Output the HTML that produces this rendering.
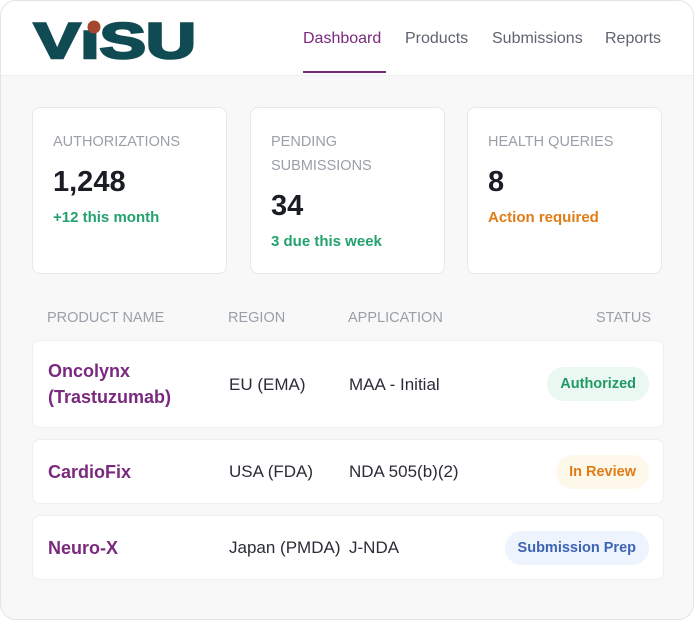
<!DOCTYPE html><html><head><style>
body{margin:0;width:696px;height:622px;background:#fff;font-family:"Liberation Sans",sans-serif;position:relative;overflow:hidden}
.frame{position:absolute;left:0;top:0;width:692px;height:618px;border:1px solid #e2e4e8;border-radius:16px;background:#f8f8f8;overflow:hidden}
.hdr{position:absolute;left:0;top:0;width:100%;height:74px;background:#fff;border-bottom:1px solid #eceef0}
.nav{position:absolute;top:29px;font-size:16px;color:#5f6470}
.card{position:absolute;top:106px;width:195px;height:167px;background:#fff;border:1px solid #e6e8eb;border-radius:8px;box-sizing:border-box}
.lbl{position:absolute;left:20px;top:22px;font-size:14.5px;color:#9aa0a8;line-height:24px}
.num{position:absolute;left:20px;font-size:29px;font-weight:bold;color:#1a1d24}
.sub{position:absolute;left:20px;font-size:15px;font-weight:bold}
.th{position:absolute;top:309px;font-size:14.5px;color:#9aa0a8}
.row{position:absolute;left:31px;width:632px;background:#fff;border:1px solid #eceef0;border-radius:8px;box-sizing:border-box}
.row span{position:absolute;font-size:17px;color:#2a2d35}
.row .p{left:15px;color:#7a2a7e;font-weight:bold;font-size:18px;line-height:26px}
.pill{position:absolute;right:14px;height:34px;line-height:34px;border-radius:17px;padding:0 13px;font-size:14.5px;font-weight:bold}
</style></head><body><div class="frame">
<div class="hdr">
<svg style="position:absolute;left:30px;top:16px" width="170" height="44"><text x="3" y="41" font-family="Liberation Sans" font-weight="bold" font-size="50" fill="#104a52" stroke="#104a52" stroke-width="2.5" textLength="162" lengthAdjust="spacingAndGlyphs">VıSU</text><circle cx="63" cy="10" r="6.5" fill="#a5472f"/></svg>
<div class="nav" style="left:302px;color:#7a2a7e">Dashboard</div>
<div style="position:absolute;left:302px;top:70px;width:83px;height:2px;background:#7a2a7e"></div>
<div class="nav" style="left:404px">Products</div>
<div class="nav" style="left:491px">Submissions</div>
<div class="nav" style="left:604px">Reports</div>
</div>
<div class="card" style="left:31px"><div class="lbl">AUTHORIZATIONS</div><div class="num" style="top:58px">1,248</div><div class="sub" style="top:101px;color:#23a26d">+12 this month</div></div>
<div class="card" style="left:249px"><div class="lbl">PENDING<br>SUBMISSIONS</div><div class="num" style="top:82px">34</div><div class="sub" style="top:125px;color:#23a26d">3 due this week</div></div>
<div class="card" style="left:466px"><div class="lbl">HEALTH QUERIES</div><div class="num" style="top:58px">8</div><div class="sub" style="top:101px;color:#e07b16">Action required</div></div>
<div class="th" style="left:46px">PRODUCT NAME</div><div class="th" style="left:227px">REGION</div><div class="th" style="left:347px">APPLICATION</div><div class="th" style="left:595px">STATUS</div>
<div class="row" style="top:339px;height:88px"><span class="p" style="top:17px">Oncolynx<br>(Trastuzumab)</span><span style="left:196px;top:34px">EU (EMA)</span><span style="left:316px;top:34px">MAA - Initial</span><div class="pill" style="top:26px;background:#ebf7f1;color:#1f9a66">Authorized</div></div>
<div class="row" style="top:438px;height:65px"><span class="p" style="top:19px">CardioFix</span><span style="left:196px;top:22px">USA (FDA)</span><span style="left:316px;top:22px">NDA 505(b)(2)</span><div class="pill" style="top:15px;background:#fef8ea;color:#e07b16">In Review</div></div>
<div class="row" style="top:514px;height:65px"><span class="p" style="top:19px">Neuro-X</span><span style="left:196px;top:22px">Japan (PMDA)</span><span style="left:316px;top:22px">J-NDA</span><div class="pill" style="top:15px;background:#eef4fd;color:#3d64b4">Submission Prep</div></div>
</div></body></html>
